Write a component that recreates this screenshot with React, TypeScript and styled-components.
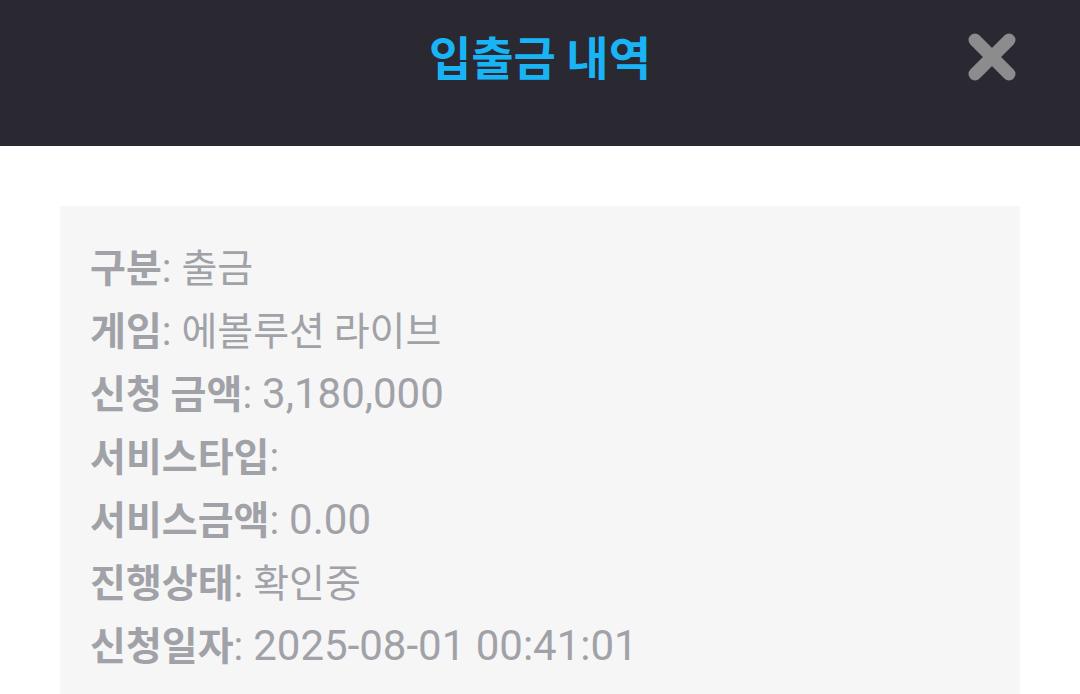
import styled, { createGlobalStyle } from 'styled-components'

const GlobalStyle = createGlobalStyle`
    html, body {
        margin: 0;
        padding: 0;
        background: #ffffff;
    }
    body {
        font-family: "Noto Sans CJK KR", "Noto Sans", sans-serif;
    }
`

const rows = [
    { label: '구분', value: '출금' },
    { label: '게임', value: '에볼루션 라이브' },
    { label: '신청 금액', value: '3,180,000', numeric: true },
    { label: '서비스타입', value: '' },
    { label: '서비스금액', value: '0.00', numeric: true },
    { label: '진행상태', value: '확인중' },
    { label: '신청일자', value: '2025-08-01 00:41:01', numeric: true },
]

export default function App() {
    return (
        <Page>
            <GlobalStyle />
            <Header>
                <Title>입출금 내역</Title>
                <CloseButton aria-label="close">
                    <svg width="52" height="52" viewBox="0 0 52 52">
                        <path d="M9 9 L43 43 M43 9 L9 43" stroke="#8c8c8e" strokeWidth="13" strokeLinecap="round" />
                    </svg>
                </CloseButton>
            </Header>
            <Card>
                {rows.map((row) => (
                    <Row key={row.label}>
                        <Label>{row.label}</Label>
                        <Colon>:</Colon>
                        {row.value && <Value $numeric={row.numeric}>{row.value}</Value>}
                    </Row>
                ))}
            </Card>
        </Page>
    )
}

const Page = styled.div`
    width: 1080px;
    height: 694px;
    overflow: hidden;
    background: #ffffff;
`

const Header = styled.header`
    position: relative;
    height: 146px;
    box-sizing: border-box;
    padding-top: 24px;
    background: #2a2932;
    display: flex;
    justify-content: center;
    align-items: flex-start;
`

const Title = styled.h1`
    margin: 0;
    font-family: "Noto Sans CJK KR", sans-serif;
    font-weight: 700;
    font-size: 46px;
    line-height: 62px;
    color: #19b4f5;
`

const CloseButton = styled.button`
    position: absolute;
    top: 31px;
    right: 62px;
    width: 52px;
    height: 52px;
    padding: 0;
    border: none;
    background: transparent;
    display: flex;
`

const Card = styled.div`
    margin: 60px 60px 0;
    padding: 28px 30px;
    background: #f6f6f7;
    display: flex;
    flex-direction: column;
`

const Row = styled.div`
    display: flex;
    align-items: baseline;
    height: 63px;
    line-height: 63px;
    color: #a0a2a7;
`

const Label = styled.span`
    font-family: "Noto Sans CJK KR", sans-serif;
    font-weight: 700;
    font-size: 39px;
`

const Colon = styled.span`
    font-family: Roboto, sans-serif;
    font-size: 40px;
    margin-right: 10px;
`

const Value = styled.span<{ $numeric?: boolean }>`
    font-family: ${(p) => (p.$numeric ? 'Roboto' : '"Noto Sans CJK KR"')}, sans-serif;
    font-weight: 400;
    font-size: ${(p) => (p.$numeric ? '42px' : '39px')};
`
